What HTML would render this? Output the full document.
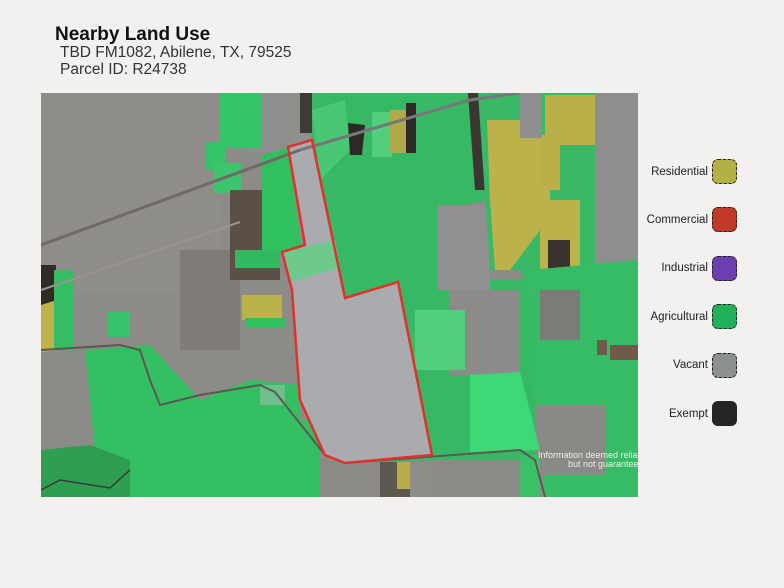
<!DOCTYPE html>
<html><head><meta charset="utf-8"><style>
html,body{margin:0;padding:0;background:#f2f1ef;width:784px;height:588px;overflow:hidden;font-family:"Liberation Sans",sans-serif;}
.t{position:absolute;left:55px;top:24px;font-size:19px;font-weight:bold;color:#111;}
.s{position:absolute;left:60px;font-size:15.5px;color:#333;}
.lg{position:absolute;right:76px;font-size:11.5px;color:#222;text-align:right;line-height:26px;}
.sw{position:absolute;left:712px;width:25px;height:25px;border-radius:6px;border:1.5px dashed #222;box-sizing:border-box;}
</style></head><body>
<div class="t">Nearby Land Use</div>
<div class="s" style="top:44px">TBD FM1082, Abilene, TX, 79525</div>
<div class="s" style="top:61px">Parcel ID: R24738</div>
<svg style="position:absolute;left:0;top:0" width="784" height="588">
<defs><clipPath id="c"><rect x="41" y="93" width="597" height="404"/></clipPath></defs>
<g clip-path="url(#c)">
<rect x="41" y="93" width="597" height="404" fill="#8d8b87"/>
<rect x="41" y="93" width="180" height="200" fill="#8e8d8a"/>
<rect x="180" y="250" width="60" height="100" fill="#7f7b76"/>
<rect x="250" y="93" width="60" height="60" fill="#8f8f8e"/>
<rect x="300" y="93" width="170" height="40" fill="#3e3a35"/>
<rect x="220" y="93" width="42" height="55" fill="#35c468"/>
<rect x="206" y="142" width="20" height="28" fill="#35c468"/>
<rect x="213" y="163" width="28" height="30" fill="#3ec46d"/>
<rect x="230" y="190" width="50" height="90" fill="#5c5046"/>
<polygon points="262,155 288,148 302,250 262,255" fill="#30c060"/>
<rect x="235" y="250" width="45" height="18" fill="#32b85f"/>
<rect x="242" y="295" width="40" height="25" fill="#b9b349"/>
<rect x="245" y="318" width="40" height="10" fill="#30c060"/>
<rect x="41" y="265" width="15" height="40" fill="#2f2a25"/>
<polygon points="41,305 57,300 60,350 41,352" fill="#bdb34a"/>
<rect x="54" y="270" width="20" height="80" fill="#36bd63"/>
<rect x="108" y="312" width="22" height="25" fill="#38c269"/>
<polygon points="85,350 150,345 200,400 250,380 300,385 300,497 110,497 95,450" fill="#35bf63"/>
<polygon points="41,450 90,445 130,460 130,497 41,497" fill="#2e9e50"/>
<rect x="260" y="385" width="25" height="20" fill="#6fbf8d"/>
<rect x="275" y="420" width="45" height="80" fill="#34c062"/>
<polygon points="312,93 470,93 490,200 438,210 440,460 345,463 312,300" fill="#37b864"/>
<rect x="430" y="280" width="110" height="180" fill="#37b864"/>
<polygon points="312,110 345,100 350,150 320,180" fill="#48c875"/>
<polygon points="348,123 365,125 362,155 350,155" fill="#2d2926"/>
<rect x="372" y="112" width="20" height="45" fill="#52cf7d"/>
<rect x="390" y="110" width="23" height="43" fill="#b0a94a"/>
<rect x="406" y="103" width="10" height="50" fill="#2d2926"/>
<polygon points="468,93 490,93 490,190 475,190" fill="#3c3631"/>
<rect x="438" y="205" width="52" height="85" fill="#909090"/>
<rect x="450" y="290" width="70" height="85" fill="#8d8b89"/>
<polygon points="478,93 600,93 600,300 530,300 520,270 490,270" fill="#39b866"/>
<polygon points="487,120 520,120 520,135 550,135 550,200 580,200 580,270 540,270 540,230 510,270 495,270 490,200" fill="#bbb24c"/>
<rect x="545" y="95" width="50" height="50" fill="#b9b04a"/>
<rect x="540" y="140" width="20" height="50" fill="#b9b04a"/>
<rect x="520" y="93" width="22" height="45" fill="#8f8f8f"/>
<rect x="595" y="93" width="43" height="210" fill="#8e8e8e"/>
<rect x="548" y="240" width="22" height="30" fill="#3a322c"/>
<polygon points="530,270 638,260 638,497 545,497 540,440 530,380" fill="#36bc64"/>
<rect x="540" y="290" width="40" height="50" fill="#7c7b78"/>
<rect x="597" y="340" width="10" height="15" fill="#6f5b4a"/>
<rect x="610" y="345" width="28" height="15" fill="#6f5b4a"/>
<rect x="535" y="405" width="70" height="70" fill="#8b8986"/>
<polygon points="470,375 520,372 540,450 470,452" fill="#3ed877"/>
<rect x="415" y="310" width="50" height="60" fill="#52cf7d"/>
<rect x="325" y="462" width="210" height="35" fill="#8c8a86"/>
<rect x="380" y="462" width="35" height="35" fill="#5d584f"/>
<rect x="397" y="462" width="16" height="27" fill="#b8ae45"/>
<rect x="410" y="462" width="22" height="35" fill="#8f8d8a"/>
<rect x="520" y="455" width="20" height="42" fill="#3bc068"/>
<polygon points="288,147 312,140 345,298 398,282 432,455 345,463 325,455 318,440 300,400 292,290 282,252 305,245" fill="#a9abaf"/>
<polygon points="282,252 335,240 340,268 290,282" fill="#6fc98c"/>
<line x1="41" y1="245" x2="300" y2="150" stroke="#6f6b64" stroke-width="3"/>
<line x1="41" y1="290" x2="240" y2="222" stroke="#9a958c" stroke-width="2"/>
<polyline points="300,150 470,100 520,93" fill="none" stroke="#777" stroke-width="3"/>
<polyline points="41,350 120,345 140,350 150,380 160,405 200,395 260,385 275,392 325,455 345,463 520,450 535,460 545,497" fill="none" stroke="#5c5854" stroke-width="2"/>
<polyline points="41,490 60,480 110,488 130,470" fill="none" stroke="#3a3a3a" stroke-width="1.5"/>
<polygon points="288,147 312,140 345,298 398,282 432,455 345,463 325,455 318,440 300,400 292,290 282,252 305,245" fill="none" stroke="#e0312c" stroke-width="2.5"/>
<text x="538" y="458" font-size="9" fill="#eee" font-family="Liberation Sans">Information deemed reliable</text>
<text x="568" y="467" font-size="9" fill="#eee" font-family="Liberation Sans">but not guaranteed</text>
</g>
</svg>
<div class="lg" style="top:159px">Residential</div>
<div class="lg" style="top:207px">Commercial</div>
<div class="lg" style="top:255px">Industrial</div>
<div class="lg" style="top:304px">Agricultural</div>
<div class="lg" style="top:352px">Vacant</div>
<div class="lg" style="top:401px">Exempt</div>
<div class="sw" style="top:159px;background:#b3b044"></div>
<div class="sw" style="top:207px;background:#c03a27"></div>
<div class="sw" style="top:256px;background:#6c3fb0"></div>
<div class="sw" style="top:304px;background:#22b05a"></div>
<div class="sw" style="top:353px;background:#8c9190"></div>
<div class="sw" style="top:401px;background:#232622"></div>
</body></html>
